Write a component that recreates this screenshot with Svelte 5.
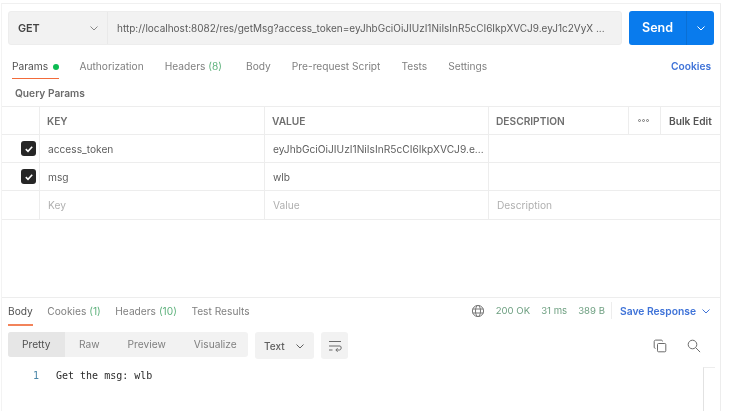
<script>
  const tabs = [
    { label: 'Authorization' },
    { label: 'Headers', count: '(8)' },
    { label: 'Body' },
    { label: 'Pre-request Script' },
    { label: 'Tests' },
    { label: 'Settings' }
  ];

  const rows = [
    { key: 'access_token', value: 'eyJhbGciOiJIUzI1NiIsInR5cCI6IkpXVCJ9.e...', on: true },
    { key: 'msg', value: 'wlb', on: true }
  ];

  const views = ['Pretty', 'Raw', 'Preview', 'Visualize'];
</script>

<div class="page">
  <div class="pane">
    <div class="url-row">
      <div class="url-box">
        <div class="method">
          <span>GET</span>
          <svg width="10" height="10" viewBox="0 0 10 10"><path d="M1.5 3.5 5 7l3.5-3.5" /></svg>
        </div>
        <div class="url">http://localhost:8082/res/getMsg?access_token=eyJhbGciOiJIUzI1NiIsInR5cCI6IkpXVCJ9.eyJ1c2VyX ...</div>
      </div>
      <div class="send">
        <span class="send-label">Send</span>
        <span class="send-arrow">
          <svg width="10" height="10" viewBox="0 0 10 10"><path d="M1.5 3.5 5 7l3.5-3.5" /></svg>
        </span>
      </div>
    </div>

    <div class="req-tabs">
      <span class="tab active">Params <i class="dot"></i></span>
      {#each tabs as t}
        <span class="tab">{t.label}{#if t.count}&nbsp;<em>{t.count}</em>{/if}</span>
      {/each}
      <span class="cookies">Cookies</span>
    </div>

    <div class="query-title">Query Params</div>

    <div class="table">
      <div class="row head">
        <div class="cell check"></div>
        <div class="cell key">KEY</div>
        <div class="cell val">VALUE</div>
        <div class="cell desc">DESCRIPTION</div>
        <div class="cell more"><i></i><i></i><i></i></div>
        <div class="cell bulk">Bulk Edit</div>
      </div>
      {#each rows as r}
        <div class="row">
          <div class="cell check">
            <span class="box">
              <svg width="10" height="10" viewBox="0 0 10 10"><path d="M1.8 5.2 4 7.3l4.2-4.5" /></svg>
            </span>
          </div>
          <div class="cell key">{r.key}</div>
          <div class="cell val">{r.value}</div>
          <div class="cell desc wide"></div>
        </div>
      {/each}
      <div class="row holder">
        <div class="cell check"></div>
        <div class="cell key">Key</div>
        <div class="cell val">Value</div>
        <div class="cell desc wide">Description</div>
      </div>
    </div>

    <div class="response">
      <div class="res-tabs">
        <span class="res-tab active">Body</span>
        <span class="res-tab">Cookies <em>(1)</em></span>
        <span class="res-tab">Headers <em>(10)</em></span>
        <span class="res-tab">Test Results</span>
        <div class="status">
          <svg class="globe" width="14" height="14" viewBox="0 0 14 14">
            <circle cx="7" cy="7" r="5.6" />
            <ellipse cx="7" cy="7" rx="2.5" ry="5.6" />
            <path d="M1.6 5h10.8M1.6 9h10.8" />
          </svg>
          <span class="ok">200 OK</span>
          <span class="ok">31 ms</span>
          <span class="ok">389 B</span>
          <span class="save">Save Response
            <svg width="10" height="10" viewBox="0 0 10 10"><path d="M1.5 3.5 5 7l3.5-3.5" /></svg>
          </span>
        </div>
      </div>

      <div class="toolbar">
        <div class="views">
          {#each views as v, i}
            <span class="view" class:current={i === 0}>{v}</span>
          {/each}
        </div>
        <div class="format">
          <span>Text</span>
          <svg width="10" height="10" viewBox="0 0 10 10"><path d="M1.5 3.5 5 7l3.5-3.5" /></svg>
        </div>
        <div class="wrap">
          <svg width="14" height="14" viewBox="0 0 14 14">
            <path d="M1 2.5h12M1 7h11c1.6 0 1.6 4-.4 4H8M9.6 9.2 7.8 11l1.8 1.8M1 11h3.5" />
          </svg>
        </div>
        <div class="tools">
          <svg width="14" height="14" viewBox="0 0 14 14">
            <path d="M9.5 2.500v-.2c0-.7-.5-1.200-1.200-1.200H2.600c-.8 0-1.400.6-1.400 1.400v5.700c0 .7.5 1.200 1.200 1.200h.2" />
            <rect x="4.500" y="4.500" width="8.300" height="8.300" rx="1" />
          </svg>
          <svg width="14" height="14" viewBox="0 0 14 14">
            <circle cx="5.500" cy="5.500" r="4.300" />
            <path d="m8.700 8.700 4.400 4.400" />
          </svg>
        </div>
      </div>

      <div class="code">
        <span class="line-no">1</span>
        <span class="line">Get the msg: wlb</span>
      </div>
      <div class="minimap"></div>
    </div>
  </div>
</div>

<style>
  :global(body) {
    margin: 0;
    background: #fff;
  }

  .page {
    width: 732px;
    height: 411px;
    overflow: hidden;
    background: #fff;
    font-family: Inter, "Liberation Sans", sans-serif;
    font-size: 10.200px;
    color: #6b6b6b;
    filter: blur(0.35px);
  }

  .pane {
    position: relative;
    box-sizing: border-box;
    width: 720px;
    height: 411px;
    margin-left: 1px;
    padding-top: 11px;
    border-top: 1px solid #f0f0f0;
    border-right: 1px solid #ededed;
    border-left: 1px solid #f3f3f3;
    margin-top: 3px;
    margin-bottom: -3px;
  }

  svg {
    fill: none;
    stroke: currentColor;
    stroke-width: 1;
  }

  .url-row {
    display: flex;
    gap: 7px;
    margin-top: -4px;
    padding-left: 6px;
  }

  .url-box {
    display: flex;
    width: 614px;
    height: 34px;
    box-sizing: border-box;
    background: #f2f2f2;
    border: 1px solid #ededed;
    border-radius: 3px;
  }

  .method {
    display: flex;
    align-items: center;
    justify-content: space-between;
    box-sizing: border-box;
    width: 99px;
    padding: 0 8px 0 9px;
    border-right: 1px solid #e9e9e9;
    font-weight: 600;
    font-size: 10.800px;
    color: #444;
  }

  .method svg {
    color: #888;
  }

  .url {
    flex: 1;
    min-width: 0;
    padding-left: 9px;
    line-height: 32px;
    white-space: nowrap;
    overflow: hidden;
    color: #5c5c5c;
    font-size: 10px;
  }

  .send {
    display: flex;
    width: 85px;
    height: 34px;
    border-radius: 3px;
    background: #097bed;
    color: #fff;
  }

  .send-label {
    width: 57px;
    border-right: 1px solid #0a6fd4;
    text-align: center;
    line-height: 34px;
    font-weight: 600;
    font-size: 12.500px;
  }

  .send-arrow {
    flex: 1;
    display: flex;
    align-items: center;
    justify-content: center;
  }

  .req-tabs {
    display: flex;
    align-items: flex-start;
    height: 31px;
    margin-top: 9px;
    padding: 0 9px 0 10px;
    gap: 21px;
    color: #808080;
    line-height: 24px;
  }

  .tab {
    height: 24px;
    white-space: nowrap;
  }

  .tab em,
  .res-tab em {
    font-style: normal;
    color: #5fb27d;
  }

  .tab em {
    padding-right: 3px;
  }

  .tab.active {
    color: #505050;
    border-bottom: 1.500px solid #f26b3a;
    margin-right: -1px;
  }

  .dot {
    display: inline-block;
    width: 6.500px;
    height: 6.500px;
    margin-left: 2px;
    border-radius: 50%;
    background: #0cbb52;
  }

  .cookies {
    margin-left: auto;
    font-weight: 600;
    color: #3f73d8;
  }

  .query-title {
    height: 21px;
    padding: 0 0 0 13px;
    line-height: 17px;
    font-weight: 600;
    color: #6b6b6b;
  }

  .table {
    border-top: 1px solid #ededed;
    border-bottom: 1px solid #ededed;
  }

  .row {
    display: flex;
    height: 28px;
    box-sizing: border-box;
    border-bottom: 1px solid #ededed;
  }

  .row:last-child {
    border-bottom: 0;
  }

  .cell {
    display: flex;
    align-items: center;
    box-sizing: border-box;
    height: 100%;
    padding-left: 8px;
    border-right: 1px solid #ededed;
    color: #5e5e5e;
    white-space: nowrap;
    overflow: hidden;
  }

  .check {
    width: 38px;
    padding-left: 19px;
  }

  .key {
    width: 225px;
  }

  .val {
    width: 224px;
  }

  .desc {
    width: 140px;
  }

  .desc.wide {
    flex: 1;
    border-right: 0;
  }

  .more {
    width: 32px;
    gap: 1px;
    padding-left: 9px;
  }

  .more i {
    width: 3px;
    height: 3px;
    box-sizing: border-box;
    border: 1px solid #777;
    border-radius: 50%;
  }

  .bulk {
    flex: 1;
    border-right: 0;
    font-weight: 600;
    color: #555;
  }

  .head .key,
  .head .val,
  .head .desc {
    padding-left: 7px;
    font-weight: 600;
    color: #6f6f6f;
  }

  .holder .cell {
    color: #b0b0b0;
  }

  .box {
    display: flex;
    align-items: center;
    justify-content: center;
    width: 15px;
    height: 15px;
    border-radius: 3px;
    background: #262626;
    color: #fff;
  }

  .box svg {
    stroke-width: 1.600;
  }

  .response {
    margin-top: 77px;
    padding: 0 0 0 6px;
    border-top: 1px solid #ededed;
  }

  .res-tabs {
    display: flex;
    align-items: flex-start;
    gap: 14.500px;
    height: 34px;
    padding-top: 5px;
    box-sizing: border-box;
    line-height: 16px;
    color: #808080;
  }

  .res-tab {
    height: 21px;
    white-space: nowrap;
  }

  .res-tab.active {
    color: #505050;
    border-bottom: 2px solid #f2835a;
  }

  .status {
    display: flex;
    align-items: center;
    gap: 11px;
    height: 17px;
    margin-top: -1px;
    margin-left: auto;
    padding-right: 9px;
    font-size: 9.600px;
    color: #6d9f80;
  }

  .globe {
    color: #777;
  }

  .save {
    display: flex;
    align-items: center;
    gap: 5px;
    height: 17px;
    margin-left: -5px;
    padding-left: 8px;
    border-left: 1px solid #ededed;
    font-size: 10.300px;
    font-weight: 600;
    color: #3f73d8;
  }

  .toolbar {
    display: flex;
    align-items: flex-start;
    gap: 7px;
    height: 27px;
  }

  .views {
    display: flex;
    width: 240px;
    height: 25px;
    background: #f2f2f2;
    border-radius: 3px;
    overflow: hidden;
  }

  .view {
    padding: 0 14px;
    line-height: 25px;
    color: #808080;
  }

  .view.current {
    min-width: 29px;
    background: #e6e6e6;
    color: #505050;
  }

  .format {
    display: flex;
    align-items: center;
    justify-content: space-between;
    box-sizing: border-box;
    width: 59px;
    height: 27px;
    padding: 0 9px;
    background: #f2f2f2;
    border-radius: 3px;
    font-weight: 500;
    font-size: 10px;
    color: #606060;
  }

  .wrap {
    display: flex;
    align-items: center;
    justify-content: center;
    width: 27px;
    height: 27px;
    background: #f2f2f2;
    border-radius: 3px;
    color: #6b6b6b;
  }

  .tools {
    display: flex;
    align-self: center;
    gap: 20px;
    margin-left: auto;
    padding-right: 19px;
    color: #6b6b6b;
  }

  .code {
    display: flex;
    margin-top: 10px;
    font-family: "DejaVu Sans Mono", "Liberation Mono", monospace;
    font-size: 10px;
    line-height: 14px;
    color: #2b2b2b;
  }

  .line-no {
    padding-left: 25px;
    width: 7px;
    color: #4a86a8;
  }

  .line {
    margin-left: 16px;
  }

  .minimap {
    position: absolute;
    top: 363px;
    right: 5px;
    width: 12px;
    height: 50px;
    box-sizing: border-box;
    border-left: 1px solid #e2e2e2;
    border-top: 1px solid #ededed;
  }
</style>
